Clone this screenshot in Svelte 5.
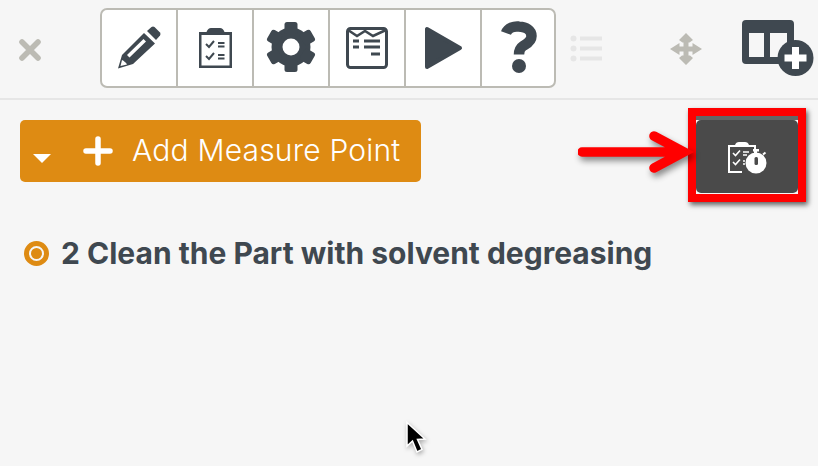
<script>
  const ink = '#3f4850';
  const teeth = [0, 60, 120, 180, 240, 300];
</script>

<div class="page">
  <header class="toolbar">
    <button class="close" aria-label="Close">
      <svg width="24" height="24" viewBox="0 0 24 24"><path d="M4 4 L20 20 M20 4 L4 20" stroke="#bcbbb4" stroke-width="5.6" stroke-linecap="round" /></svg>
    </button>

    <div class="tool-group">
      <button class="tool" aria-label="Edit">
        <svg width="60" height="60" viewBox="0 0 60 60">
          <path fill-rule="evenodd" fill={ink} d="M9 50.500 L13 37 L35 15 L46 25.500 L24 46 Z M18 37 L20.500 39.500 L37 23.500 L34.500 21 Z M13 42 L11.500 48 L18 46.500 C17 44.500 15 43 13 42 Z" />
          <path fill={ink} d="M38 13 L42.500 9 Q44 8 45.500 9 L51 14.500 Q52 16 51 17.500 L47 22 Z" />
        </svg>
      </button>
      <button class="tool" aria-label="Checklist">
        <svg width="60" height="60" viewBox="0 0 60 60">
          <path fill={ink} d="M14 14 H21.500 Q23 10 26 10 H35 Q38 10 39.500 14 H47 V50 H14 Z M16.500 17 V47.500 H44.500 V17 Z" fill-rule="evenodd" />
          <path d="M21 26 L24 29 L29 23 M21 38 L24 41 L29 35" fill="none" stroke={ink} stroke-width="2" />
          <path d="M33 25 H39.500 M33 28.500 H39.500 M33 37 H39.500 M33 40.500 H39.500" stroke={ink} stroke-width="1.800" />
        </svg>
      </button>
      <button class="tool" aria-label="Settings">
        <svg width="60" height="60" viewBox="0 0 60 60">
          <circle cx="30" cy="29" r="19.500" fill={ink} />
          {#each teeth as deg}
            <rect x="23.500" y="4" width="13" height="12" rx="2.500" fill={ink} transform="rotate({deg} 30 29)" />
          {/each}
          <circle cx="30" cy="29" r="8.500" fill="#fff" />
        </svg>
      </button>
      <button class="tool" aria-label="Form">
        <svg width="60" height="60" viewBox="0 0 60 60">
          <rect x="10.500" y="10.500" width="39" height="39" rx="3" fill="none" stroke={ink} stroke-width="3" />
          <path d="M11 12 L20 18 L28 13 L36 18 L49 12" fill="none" stroke={ink} stroke-width="2.500" />
          <path d="M16 23 H22 M27 23 H43 M16 29 H22 M27 29 H43 M34 36 H43" stroke={ink} stroke-width="3" />
        </svg>
      </button>
      <button class="tool" aria-label="Run">
        <svg width="60" height="60" viewBox="0 0 60 60">
          <path fill={ink} stroke={ink} stroke-width="4" stroke-linejoin="round" d="M14 11 V49 L47 30 Z" />
        </svg>
      </button>
      <button class="tool" aria-label="Help">
        <svg width="60" height="60" viewBox="0 0 60 60">
          <path d="M17 15 C19 9.500 25 8 30 8.500 C37 9 42.500 12 42.500 18 C42.500 24 37 26 34 28 C31 30 30 32 30 36.500" fill="none" stroke={ink} stroke-width="10.500" />
          <circle cx="30" cy="48" r="7" fill={ink} />
        </svg>
      </button>
    </div>

    <div class="list-icon">
      <svg width="34" height="28" viewBox="0 0 34 28">
        <circle cx="3.500" cy="3.500" r="3" fill="#e6e6e6" />
        <circle cx="3.500" cy="13.500" r="3" fill="#e6e6e6" />
        <circle cx="3.500" cy="23.500" r="3" fill="#e6e6e6" />
        <path d="M10 3.500 H32 M10 13.500 H32 M10 23.500 H32" stroke="#e6e6e6" stroke-width="4" />
      </svg>
    </div>

    <div class="move-icon">
      <svg width="34" height="34" viewBox="0 0 34 34">
        <path fill="#bcbbb4" d="M17 1 L24 8 L20.500 10.500 H19.500 V14.500 H23.500 V11 L33 17 L23.500 23 V19.500 H19.500 V23.500 H21 L24 26 L17 33 L10 26 L13 23.500 H14.500 V19.500 H10.500 V23 L1 17 L10.500 11 V14.500 H14.500 V10.500 H13.500 L10 8 Z" />
      </svg>
    </div>

    <div class="add-column">
      <svg width="72" height="58" viewBox="0 0 72 58">
        <path fill-rule="evenodd" fill={ink} d="M4 1 H48 Q52 1 52 5 V41 Q52 45 48 45 H4 Q0 45 0 41 V5 Q0 1 4 1 Z M7 14 V38 H22 V14 Z M28 14 V38 H45 V14 Z" />
        <circle cx="53.500" cy="39" r="18" fill={ink} />
        <path d="M53.500 28 V50 M42.500 39 H64.500" stroke="#fff" stroke-width="7" />
      </svg>
    </div>
  </header>

  <main class="content">
    <div class="actions">
      <button class="add-point">
        <span class="caret"></span>
        <svg class="plus" width="30" height="30" viewBox="0 0 30 30"><path d="M15 3 V27 M3 15 H27" stroke="#fff" stroke-width="5.500" stroke-linecap="round" /></svg>
        <span>Add Measure Point</span>
      </button>

      <button class="timer" aria-label="Timed checklist">
        <svg width="46" height="36" viewBox="-2 -1 46 36">
          <path fill="#fff" fill-rule="evenodd" d="M2 5 H9 Q10 2 13 2 H19 Q22 2 23 5 H30 V14 H28 V7 H4 V31 H16 V33 H2 Z" />
          <path d="M7 13 L9.500 15.500 L14 10.500 M7 22 L9.500 24.500 L14 19.500" fill="none" stroke="#fff" stroke-width="1.600" />
          <path d="M17 12 H23 M17 15 H21 M17 21 H19 M17 24 H19" stroke="#fff" stroke-width="1.400" />
          <circle cx="30" cy="23" r="10.500" fill="#fff" />
          <rect x="27" y="9" width="6" height="2.500" fill="#fff" />
          <rect x="29" y="10" width="2" height="4" fill="#fff" />
          <path d="M37 14.500 L39.500 12.500" stroke="#fff" stroke-width="2" />
          <rect x="28.500" y="17" width="3.500" height="8" rx="1.500" fill="#4a4a4a" />
        </svg>
      </button>
    </div>

    <div class="step">
      <span class="dot"></span>
      <h2>2 Clean the Part with solvent degreasing</h2>
    </div>
  </main>

  <!-- callout drawn over the screenshot -->
  <div class="highlight"></div>
  <svg class="arrow" width="120" height="50" viewBox="0 0 120 50">
    <path d="M4 21 H100 M76 5 L106 21 L76 37" fill="none" stroke="#f00" stroke-width="9.500" stroke-linecap="round" />
  </svg>

  <svg class="cursor" width="26" height="36" viewBox="0 0 26 36">
    <path fill="#000" stroke="#fff" stroke-width="1.500" d="M2 1.500 V25 L7.500 20 L12 31 L17 28.500 L12.500 18.500 L20 18 Z" />
  </svg>
</div>

<style>
  :global(body) {
    margin: 0;
    background: #f6f6f6;
  }
  .page {
    position: relative;
    width: 818px;
    height: 466px;
    overflow: hidden;
    background: #f6f6f6;
    font-family: Inter, Lato, sans-serif;
  }
  button {
    padding: 0;
    border: 0;
    background: none;
    font-family: inherit;
    display: flex;
    align-items: center;
    justify-content: center;
  }
  .toolbar {
    box-sizing: border-box;
    height: 100px;
    padding: 8px 0 0 18px;
    border-bottom: 2px solid #e6e6e6;
    display: flex;
    align-items: flex-start;
  }
  .close {
    width: 24px;
    height: 24px;
    margin-top: 30px;
  }
  .tool-group {
    box-sizing: border-box;
    width: 456px;
    height: 80px;
    margin-left: 58px;
    background: #fff;
    border: 2px solid #bcbbb4;
    border-radius: 7px;
    display: flex;
  }
  .tool {
    box-sizing: content-box;
    width: 74px;
    height: 76px;
    flex: none;
    border-right: 2px solid #bcbbb4;
  }
  .tool:last-child {
    border-right: 0;
  }
  .list-icon {
    margin: 27px 0 0 14px;
    height: 28px;
  }
  .move-icon {
    margin: 24px 0 0 65px;
    height: 34px;
  }
  .add-column {
    margin: 11px 0 0 39px;
    height: 58px;
  }
  .content {
    padding: 20px 20px 0;
  }
  .actions {
    display: flex;
    justify-content: space-between;
    align-items: flex-start;
  }
  .add-point {
    width: 401px;
    height: 62px;
    background: #de8b13;
    border-radius: 5px;
    color: #fff;
    font-size: 30px;
    font-weight: 300;
    letter-spacing: 0.2px;
    justify-content: flex-start;
    padding: 0 0 2px 13px;
  }
  .caret {
    width: 0;
    height: 0;
    border-left: 9px solid transparent;
    border-right: 9px solid transparent;
    border-top: 9px solid #fff;
    margin-top: 16px;
  }
  .plus {
    margin: 2px 19px 0 32px;
  }
  .timer {
    width: 102px;
    height: 73px;
    background: #4a4a4a;
    border-radius: 5px;
  }
  .step {
    display: flex;
    align-items: center;
    gap: 12px;
    margin-top: 40px;
    padding-left: 4px;
  }
  .dot {
    box-sizing: border-box;
    width: 25px;
    height: 25px;
    border-radius: 50%;
    border: 5px solid #de8b13;
    background: #f6f6f6;
    position: relative;
  }
  .dot::after {
    content: "";
    position: absolute;
    inset: 2px;
    border-radius: 50%;
    background: #de8b13;
  }
  h2 {
    margin: 0;
    font-size: 30px;
    line-height: 40px;
    font-weight: 700;
    color: #3f4850;
  }
  .highlight {
    position: absolute;
    left: 688px;
    top: 108px;
    width: 102px;
    height: 78px;
    border: 8px solid #f00;
    box-shadow: 2px 3px 5px rgba(0, 0, 0, 0.6), inset 0 4px 0 #666;
  }
  .arrow {
    position: absolute;
    left: 578px;
    top: 131px;
    filter: drop-shadow(2px 4px 3px rgba(0, 0, 0, 0.45));
  }
  .cursor {
    position: absolute;
    left: 405px;
    top: 421px;
    filter: drop-shadow(1px 2px 2px rgba(0, 0, 0, 0.3));
  }
</style>
